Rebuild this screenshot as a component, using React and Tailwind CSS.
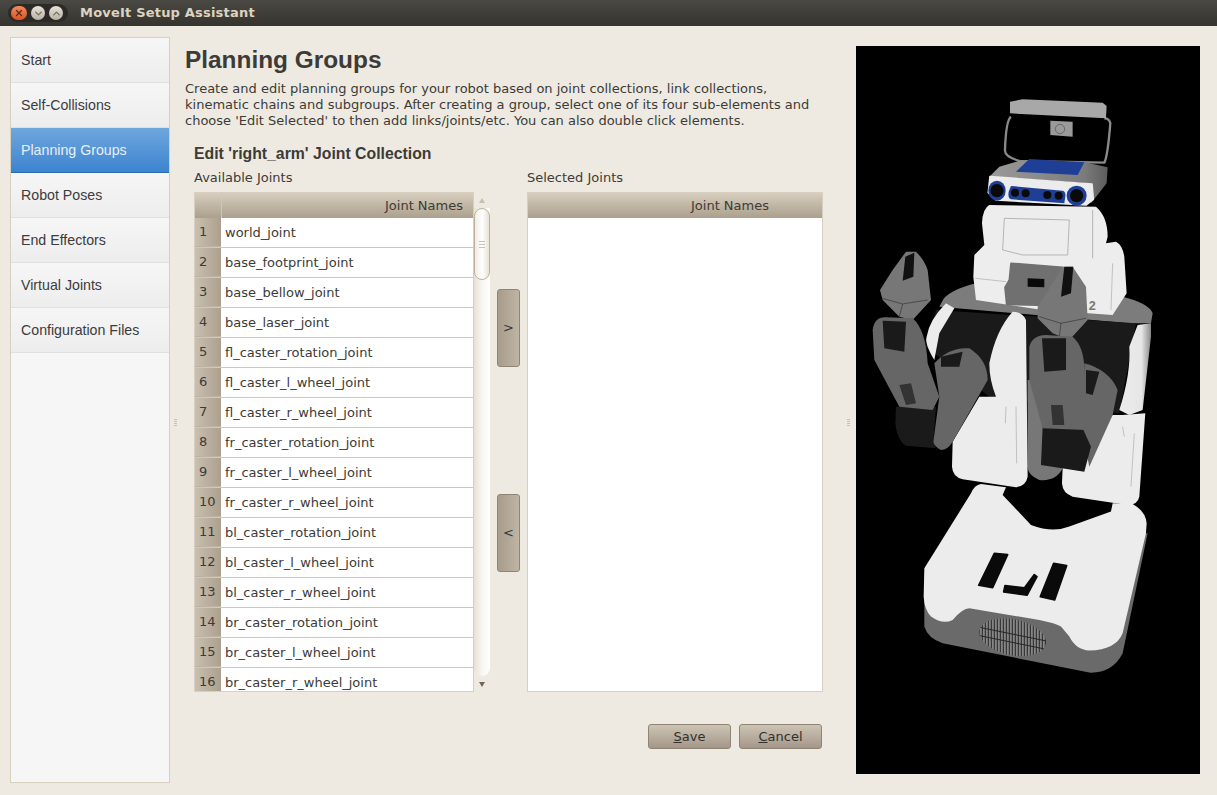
import { X, ChevronDown, ChevronUp } from "lucide-react"

const steps = ["Start", "Self-Collisions", "Planning Groups", "Robot Poses", "End Effectors", "Virtual Joints", "Configuration Files"]

const joints = [
  "world_joint",
  "base_footprint_joint",
  "base_bellow_joint",
  "base_laser_joint",
  "fl_caster_rotation_joint",
  "fl_caster_l_wheel_joint",
  "fl_caster_r_wheel_joint",
  "fr_caster_rotation_joint",
  "fr_caster_l_wheel_joint",
  "fr_caster_r_wheel_joint",
  "bl_caster_rotation_joint",
  "bl_caster_l_wheel_joint",
  "bl_caster_r_wheel_joint",
  "br_caster_rotation_joint",
  "br_caster_l_wheel_joint",
  "br_caster_r_wheel_joint",
]

function TitleBar() {
  return (
    <div className="h-[26px] flex items-center bg-gradient-to-b from-[#4b4943] to-[#35332e] font-['DejaVu_Sans',sans-serif]">
      <div className="ml-[8px] w-[60px] h-[18px] rounded-full bg-[#2b2a27] flex items-center gap-[4px] px-[3px]">
        <span className="w-[16px] h-[14px] rounded-full bg-gradient-to-b from-[#f08a5c] to-[#d9531e] flex items-center justify-center">
          <X size={10} strokeWidth={3} className="text-[#5a2a14]" />
        </span>
        <span className="w-[14px] h-[14px] rounded-full bg-gradient-to-b from-[#e8e3d8] to-[#b8b1a3] flex items-center justify-center">
          <ChevronDown size={11} strokeWidth={3} className="text-[#77705f]" />
        </span>
        <span className="w-[14px] h-[14px] rounded-full bg-gradient-to-b from-[#e8e3d8] to-[#b8b1a3] flex items-center justify-center">
          <ChevronUp size={11} strokeWidth={3} className="text-[#77705f]" />
        </span>
      </div>
      <span className="ml-[12px] text-[13px] font-bold text-[#dcd3c0] tracking-[0.2px]">MoveIt Setup Assistant</span>
    </div>
  )
}

function Sidebar() {
  return (
    <div className="w-[160px] h-[746px] mt-[11px] border border-[#d8cfc0] bg-[#f6f6f6] font-['Liberation_Sans',sans-serif] text-[14.2px]">
      {steps.map((step) =>
        step === "Planning Groups" ? (
          <div key={step} className="h-[45px] flex items-center pl-[10px] pt-[2px] text-[#e8eef6] bg-gradient-to-b from-[#6fa6dd] to-[#3b84d0] border-b border-[#2b6cb0]">
            {step}
          </div>
        ) : (
          <div key={step} className="h-[45px] flex items-center pl-[10px] pt-[2px] text-[#3c3c3c] bg-gradient-to-b from-[#f6f6f6] to-[#ededed] border-b border-[#e2e0dc]">
            {step}
          </div>
        )
      )}
    </div>
  )
}

function Splitter() {
  return (
    <div className="flex flex-col items-center justify-center gap-[1px] h-full pt-[24px]">
      <span className="w-[3px] h-[1px] bg-[#c9c1b2]" />
      <span className="w-[3px] h-[1px] bg-[#c9c1b2]" />
      <span className="w-[3px] h-[1px] bg-[#c9c1b2]" />
      <span className="w-[3px] h-[1px] bg-[#c9c1b2]" />
    </div>
  )
}

function Scrollbar() {
  return (
    <div className="w-[16px] h-[500px] flex flex-col items-center">
      <div className="h-[16px] flex items-center justify-center w-full">
        <span className="w-0 h-0 border-x-[3px] border-x-transparent border-b-[5px] border-b-[#c9c0ae]" />
      </div>
      <div className="w-[16px] h-[468px] bg-gradient-to-r from-[#e6e0d4] via-[#f8f6f2] to-[#ffffff] rounded-b-[8px]">
        <div className="w-[16px] h-[72px] rounded-[8px] border border-[#bdb29e] bg-gradient-to-r from-[#f0ece4] via-[#ffffff] to-[#e8e3d8] flex flex-col items-center justify-center gap-[2px]">
          <span className="w-[6px] h-[1px] bg-[#c9c0ae]" />
          <span className="w-[6px] h-[1px] bg-[#c9c0ae]" />
          <span className="w-[6px] h-[1px] bg-[#c9c0ae]" />
        </div>
      </div>
      <div className="h-[16px] flex items-center justify-center w-full">
        <span className="w-0 h-0 border-x-[3px] border-x-transparent border-t-[5px] border-t-[#6e685c]" />
      </div>
    </div>
  )
}

function AvailableTable() {
  return (
    <div className="w-[280px] h-[500px] border border-[#d8cfc0] bg-white overflow-hidden">
      <div className="flex h-[25px] bg-gradient-to-b from-[#d6cebf] to-[#ac9f8d]">
        <div className="w-[27px] border-r border-[#cfc6b6]" />
        <div className="flex-1 flex items-center justify-end pr-[10px]">Joint Names</div>
      </div>
      {joints.map((name, i) => (
        <div key={name} className="flex h-[30px] border-b border-[#c8c8c8]">
          <div className="w-[26px] flex items-center pl-[4px] bg-gradient-to-r from-[#c9c0b1] to-[#ac9f8d] border-b border-[#bdb3a3]">{i + 1}</div>
          <div className="flex-1 flex items-center pl-[4px]">{name}</div>
        </div>
      ))}
    </div>
  )
}

function SelectedTable() {
  return (
    <div className="w-[296px] h-[500px] border border-[#d8cfc0] bg-white">
      <div className="flex h-[25px] bg-gradient-to-b from-[#d6cebf] to-[#ac9f8d] items-center justify-end pr-[53px]">Joint Names</div>
    </div>
  )
}

function MoveButton({ label }) {
  return (
    <button className="w-[23px] h-[78px] rounded-[3px] border border-[#8f8574] bg-gradient-to-r from-[#a89c8b] to-[#bfb5a5] text-[#33363c] text-[13px]">
      {label}
    </button>
  )
}

function ActionButton({ first, rest }) {
  return (
    <button className="w-[83px] h-[25px] rounded-[3px] border border-[#8f8574] bg-gradient-to-b from-[#cdc4b5] to-[#a4978a] text-[#33302a] text-[13px]">
      <u>{first}</u>{rest}
    </button>
  )
}

// filled outline with softly rounded corners
function Part({ d, fill }) {
  return <path d={d} fill={fill} stroke={fill} strokeWidth="5" strokeLinejoin="round" />
}

function RobotView() {
  return (
    <div className="w-[344px] h-[728px] mt-[20px] bg-black">
      <svg width="344" height="728" viewBox="0 0 344 728">
        <defs>
          <clipPath id="vent">
            <ellipse cx="470" cy="1672" rx="102" ry="54" transform="rotate(12 470 1672)" />
          </clipPath>
          <linearGradient id="panel" x1="0" x2="1" y1="0" y2="0">
            <stop offset="0" stopColor="#ececec" />
            <stop offset="0.7" stopColor="#e6e6e6" />
            <stop offset="1" stopColor="#8a8a8a" />
          </linearGradient>
          <linearGradient id="headTop" x1="0" x2="1" y1="0" y2="0">
            <stop offset="0" stopColor="#9a9a9a" />
            <stop offset="0.8" stopColor="#7c7c7c" />
            <stop offset="1" stopColor="#5c5c5c" />
          </linearGradient>
        </defs>
        {/* traced from the crops at 3x, one unit is a third of a pixel */}
        <g transform="translate(0 34) scale(0.3333)">
          {/* base */}
          <path d="M205 1550 L205 1640 Q215 1675 260 1690 L700 1778 Q770 1780 800 1720 L875 1360 L860 1360 L205 1550Z" fill="#6a6a6a" />
          <path d="M345 1240 Q355 1215 375 1212 L450 1222 L440 1245 L525 1335 Q590 1360 640 1340 L765 1295 L770 1270 L830 1272 Q870 1295 872 1330 L870 1360 L800 1660 Q780 1710 700 1712 Q660 1710 640 1670 L615 1640 Q600 1630 550 1620 L340 1585 Q320 1585 290 1620 Q260 1635 225 1610 Q205 1590 203 1550 L205 1465Z" fill="#ececec" />
          <Part d="M415 1420 L455 1424 L410 1523 L368 1516Z" fill="#0a0a0a" />
          <Part d="M593 1450 L632 1457 L596 1560 L553 1550Z" fill="#0a0a0a" />
          <Part d="M447 1517 L505 1524 L535 1484 L543 1490 L513 1546 L443 1536Z" fill="#0a0a0a" />
          <ellipse cx="470" cy="1672" rx="102" ry="54" transform="rotate(12 470 1672)" fill="#858585" />
          <g clipPath="url(#vent)" stroke="#262626" strokeWidth="3">
            {Array.from({ length: 24 }, (_, i) => (
              <line key={i} x1={370 + i * 9} y1="1600" x2={370 + i * 9} y2="1750" />
            ))}
            <line x1="360" y1="1640" x2="580" y2="1685" />
            <line x1="360" y1="1665" x2="580" y2="1710" />
          </g>

          {/* torso */}
          <path d="M258 665 Q270 635 350 612 L800 650 Q880 670 890 700 L885 730 L820 730 L250 680Z" fill="#7c7c7c" />
          <path d="M240 690 L840 730 L790 1000 L400 950 L210 800Z" fill="#1a1a1a" />
          <path d="M270 670 L295 685 L250 760 L235 840 Q205 790 212 770 Q220 720 270 670Z" fill="#ececec" />

          {/* legs */}
          <path d="M515 900 L700 900 L700 1160 L620 1165 Q600 1205 550 1200 Q515 1185 515 1160Z" fill="#777" />
          <path d="M470 695 Q500 695 510 720 L515 1190 Q510 1218 480 1222 L320 1198 Q290 1190 288 1160 L290 1085 L370 950 L420 950 Q400 900 400 850 Q420 750 470 695Z" fill="#ececec" />
          <path d="M800 1005 L868 1000 L850 1250 Q845 1275 815 1275 L650 1250 Q620 1240 618 1210 L620 1165 L770 1005Z" fill="#ececec" />
          <path d="M845 735 L885 730 L885 770 L860 990 L820 1005 L790 990 Q825 880 820 800Z" fill="url(#panel)" />
          <path d="M480 980 L482 1150 M450 980 L448 1030 M800 1040 L805 1070 M835 1060 L825 1220" stroke="#aaa" strokeWidth="2" fill="none" />

          {/* chest, neck */}
          <path d="M355 525 L385 495 L378 430 Q380 385 400 375 L720 380 Q755 410 755 470 L750 490 L780 485 Q800 495 805 530 L812 640 L770 705 L560 690 L360 660 L352 590Z" fill="#ededed" />
          <path d="M358 595 L450 605 M770 550 L765 690" stroke="#aaa" strokeWidth="2" fill="none" />
          <path d="M445 415 L640 420 L635 525 M445 415 L440 510 L500 525 L635 525 M710 390 L710 535" stroke="#999" strokeWidth="2" fill="none" />
          <text x="698" y="690" fontFamily="Liberation Sans, sans-serif" fontSize="38" fontWeight="700" fill="#777">2</text>
          <Part d="M465 550 L620 562 L650 590 L640 678 L452 673 L447 622 L460 600Z" fill="#707070" />
          <path d="M515 595 L565 597 L565 622 L515 620Z" fill="#0a0a0a" />

          {/* head */}
          <path d="M465 110 Q450 120 447 210 Q445 230 490 243 L745 248 Q755 230 763 130 Q760 115 745 115" fill="none" stroke="#8a8a8a" strokeWidth="7" />
          <path d="M400 290 L430 260 L490 243 L680 245 L755 262 L752 310 L705 370 L700 310Z" fill="url(#headTop)" />
          <path d="M480 275 L520 237 L685 247 L665 285Z" fill="#1f3f96" />
          <Part d="M402 290 L708 312 L712 358 L690 375 L420 360 L397 338Z" fill="#ececec" />
          <ellipse cx="423" cy="332" rx="26" ry="30" fill="#1f3f96" />
          <ellipse cx="662" cy="347" rx="30" ry="30" fill="#1f3f96" />
          <path d="M465 318 L620 332 Q630 335 628 350 L625 370 L465 358 Q455 355 458 335Z" fill="#1f3f96" />
          <circle cx="423" cy="332" r="20" fill="#0a0a0a" />
          <circle cx="662" cy="347" r="20" fill="#0a0a0a" />
          <circle cx="477" cy="338" r="12" fill="#0a0a0a" />
          <circle cx="509" cy="340" r="12" fill="#0a0a0a" />
          <circle cx="574" cy="345" r="12" fill="#0a0a0a" />
          <circle cx="608" cy="347" r="12" fill="#0a0a0a" />
          <path d="M462 65 L500 58 L740 68 L752 78 L750 115 L462 100Z" fill="#a8a8a8" />
          <path d="M583 122 L650 125 L650 170 L583 165Z" fill="#9a9a9a" />
          <circle cx="612" cy="147" r="14" fill="none" stroke="#666" strokeWidth="3" />

          {/* left arm */}
          <path d="M150 515 L180 515 Q205 540 215 570 L225 660 L170 720 L130 710 L80 660 L72 630 L110 570Z" fill="#777" />
          <path d="M148 530 L175 518 L172 590 L140 602Z" fill="#111" />
          <path d="M78 655 L140 672 L215 660 M140 672 L130 710" stroke="#333" strokeWidth="2" fill="none" />
          <path d="M120 980 L240 980 L232 1085 L240 1105 L150 1097 Q125 1085 118 1030Z" fill="#1a1a1a" />
          <path d="M235 850 Q280 800 340 805 Q395 840 395 900 L290 1085 Q275 1110 255 1110 Q235 1100 232 1085 L250 950Z" fill="#666" />
          <path d="M255 830 L320 815 L310 860 L255 860Z" fill="#1a1a1a" />
          <path d="M50 750 Q55 710 90 712 L170 715 Q210 750 215 850 L250 950 L230 990 L130 980 L55 840Z" fill="#666" />
          <path d="M80 722 L150 725 L145 815 L85 805Z" fill="#1a1a1a" />
          <path d="M130 915 L165 910 L180 970 L150 975Z" fill="#333" />

          {/* right arm */}
          <path d="M685 850 Q760 870 785 930 L770 1005 L700 1160 L680 1060Z" fill="#666" />
          <path d="M690 870 L730 875 L710 945 L690 940Z" fill="#1a1a1a" />
          <path d="M560 1040 L680 1045 L705 1100 L685 1175 L555 1155Z" fill="#1a1a1a" />
          <path d="M620 560 L650 560 L690 620 L695 720 L640 780 L590 760 L545 715 L545 680 L590 610Z" fill="#777" />
          <path d="M625 560 L652 560 L645 640 L615 650Z" fill="#111" />
          <path d="M550 710 L615 730 L690 715 M615 730 L610 770" stroke="#333" strokeWidth="2" fill="none" />
          <path d="M520 800 Q530 765 570 765 L650 770 Q685 800 685 870 L690 1050 L560 1045 L520 900Z" fill="#666" />
          <path d="M558 775 L630 775 L630 870 L565 875Z" fill="#1a1a1a" />
          <path d="M585 975 L620 975 L625 1035 L590 1035Z" fill="#333" />
        </g>
      </svg>
    </div>
  )
}

export default function App() {
  return (
    <div className="w-[1217px] h-[795px] bg-[#eeeae2] overflow-hidden">
      <TitleBar />
      <div className="flex h-[769px] pl-[10px]">
        <Sidebar />
        <div className="w-[10px]"><Splitter /></div>
        <div className="w-[660px] pl-[5px] font-['DejaVu_Sans',sans-serif] text-[13px] text-[#3c3b37]">
          <h1 className="mt-[18px] h-[32px] font-['Liberation_Sans',sans-serif] font-bold text-[24.4px] leading-[32px]">Planning Groups</h1>
          <p className="mt-[5px] leading-[16px]">
            Create and edit planning groups for your robot based on joint collections, link collections,<br />
            kinematic chains and subgroups. After creating a group, select one of its four sub-elements and<br />
            choose 'Edit Selected' to then add links/joints/etc. You can also double click elements.
          </p>
          <div className="pl-[9px]">
            <h2 className="mt-[15px] h-[20px] font-['Liberation_Sans',sans-serif] font-bold text-[15.8px] leading-[20px]">Edit 'right_arm' Joint Collection</h2>
            <div className="flex mt-[5px] h-[18px] items-center">
              <span className="w-[333px]">Available Joints</span>
              <span>Selected Joints</span>
            </div>
            <div className="flex mt-[5px]">
              <AvailableTable />
              <Scrollbar />
              <div className="w-[37px] flex flex-col items-center pt-[97px] gap-[127px]">
                <MoveButton label=">" />
                <MoveButton label="<" />
              </div>
              <SelectedTable />
            </div>
            <div className="flex justify-end gap-[8px] mt-[32px] w-[628px]">
              <ActionButton first="S" rest="ave" />
              <ActionButton first="C" rest="ancel" />
            </div>
          </div>
        </div>
        <div className="w-[16px]"><Splitter /></div>
        <RobotView />
      </div>
    </div>
  )
}
